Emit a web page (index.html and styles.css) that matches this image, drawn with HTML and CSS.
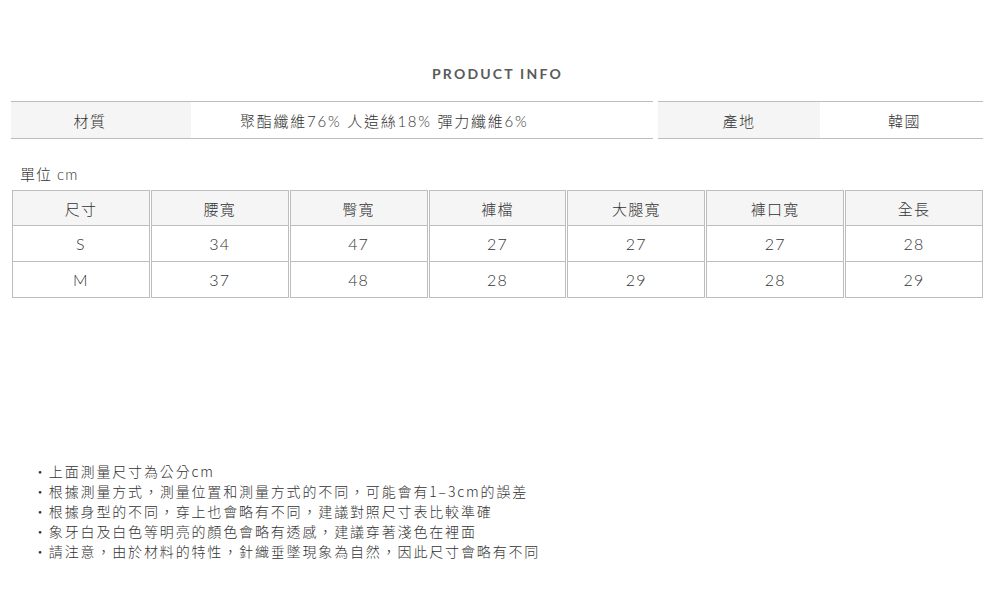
FILE: index.html
```html
<!DOCTYPE html>
<html lang="zh-Hant">
<head>
<meta charset="utf-8">
<title>Product Info</title>
<link rel="stylesheet" href="styles.css">
</head>
<body>
<div class="page">
  <h2 class="title">PRODUCT INFO</h2>
  <div class="info">
    <div class="info-box info-main">
      <div class="label label-material">材質</div>
      <div class="value value-material">聚酯纖維76% 人造絲18% 彈力纖維6%</div>
    </div>
    <div class="info-box info-origin">
      <div class="label label-origin">產地</div>
      <div class="value value-origin">韓國</div>
    </div>
  </div>
  <p class="unit">單位 cm</p>
  <table class="size">
    <thead>
      <tr><th>尺寸</th><th>腰寬</th><th>臀寬</th><th>褲檔</th><th>大腿寬</th><th>褲口寬</th><th>全長</th></tr>
    </thead>
    <tbody>
      <tr><td>S</td><td>34</td><td>47</td><td>27</td><td>27</td><td>27</td><td>28</td></tr>
      <tr><td>M</td><td>37</td><td>48</td><td>28</td><td>29</td><td>28</td><td>29</td></tr>
    </tbody>
  </table>
  <ul class="notes">
    <li>上面測量尺寸為公分cm</li>
    <li>根據測量方式，測量位置和測量方式的不同，可能會有1–3cm的誤差</li>
    <li>根據身型的不同，穿上也會略有不同，建議對照尺寸表比較準確</li>
    <li>象牙白及白色等明亮的顏色會略有透感，建議穿著淺色在裡面</li>
    <li>請注意，由於材料的特性，針織垂墜現象為自然，因此尺寸會略有不同</li>
  </ul>
</div>
</body>
</html>
```

FILE: styles.css
```css
* { box-sizing: border-box; }
html, body { margin: 0; padding: 0; background: #fff; }
body {
  font-family: "Lato", "Noto Sans CJK TC", sans-serif;
  color: #333;
  width: 993px;
  height: 597px;
  overflow: hidden;
}
.page { padding-top: 64px; }
.title {
  margin: 0;
  text-align: center;
  font-family: "Lato", sans-serif;
  font-weight: 700;
  font-size: 14px;
  letter-spacing: 2.2px;
  line-height: 20px;
  color: #5a5a5a;
  padding-left: 2px;
}
.info {
  display: flex;
  gap: 5px;
  margin: 17px 10px 0 11px;
}
.info-box {
  display: flex;
  height: 38px;
  border-top: 1px solid #bdbdbd;
  border-bottom: 1px solid #bdbdbd;
  font-size: 15px;
  font-weight: 300;
  letter-spacing: 1.5px;
  color: #333;
}
.info-main { width: 642px; }
.info-origin { width: 325px; }
.label, .value {
  display: flex;
  align-items: center;
  justify-content: center;
}
.label { background: #f5f5f5; }
.label-material { width: 180px; padding-right: 22px; }
.value-material { flex: 1; justify-content: flex-start; padding-left: 49px; letter-spacing: 1.75px; }
.label-origin { width: 162px; }
.value-origin { flex: 1; padding-left: 6px; }
.unit {
  margin: 25px 0 0 20px;
  font-size: 15px;
  font-weight: 300;
  letter-spacing: 1px;
  line-height: 20px;
  color: #333;
}
.size {
  margin: 6px 0 0 11px;
  width: 973px;
  border-collapse: separate;
  border-spacing: 1px 0;
  table-layout: fixed;
  font-size: 15px;
  font-weight: 300;
  letter-spacing: 1.2px;
  color: #333;
}
.size th, .size td {
  border-left: 1px solid #bdbdbd;
  border-right: 1px solid #bdbdbd;
  border-bottom: 1px solid #bdbdbd;
  text-align: center;
  padding: 0;
  font-weight: 300;
}
.size th {
  background: #f5f5f5;
  border-top: 1px solid #bdbdbd;
  height: 36px;
}
.size td { height: 36px; font-size: 16px; }
.notes {
  list-style: none;
  margin: 163px 0 0 0;
  padding: 0 0 0 33px;
  font-family: "Noto Sans CJK TC", sans-serif;
  font-size: 14px;
  font-weight: 300;
  line-height: 20px;
  letter-spacing: 1.85px;
  color: #333;
}
.notes li::before {
  content: "・";
}
```
